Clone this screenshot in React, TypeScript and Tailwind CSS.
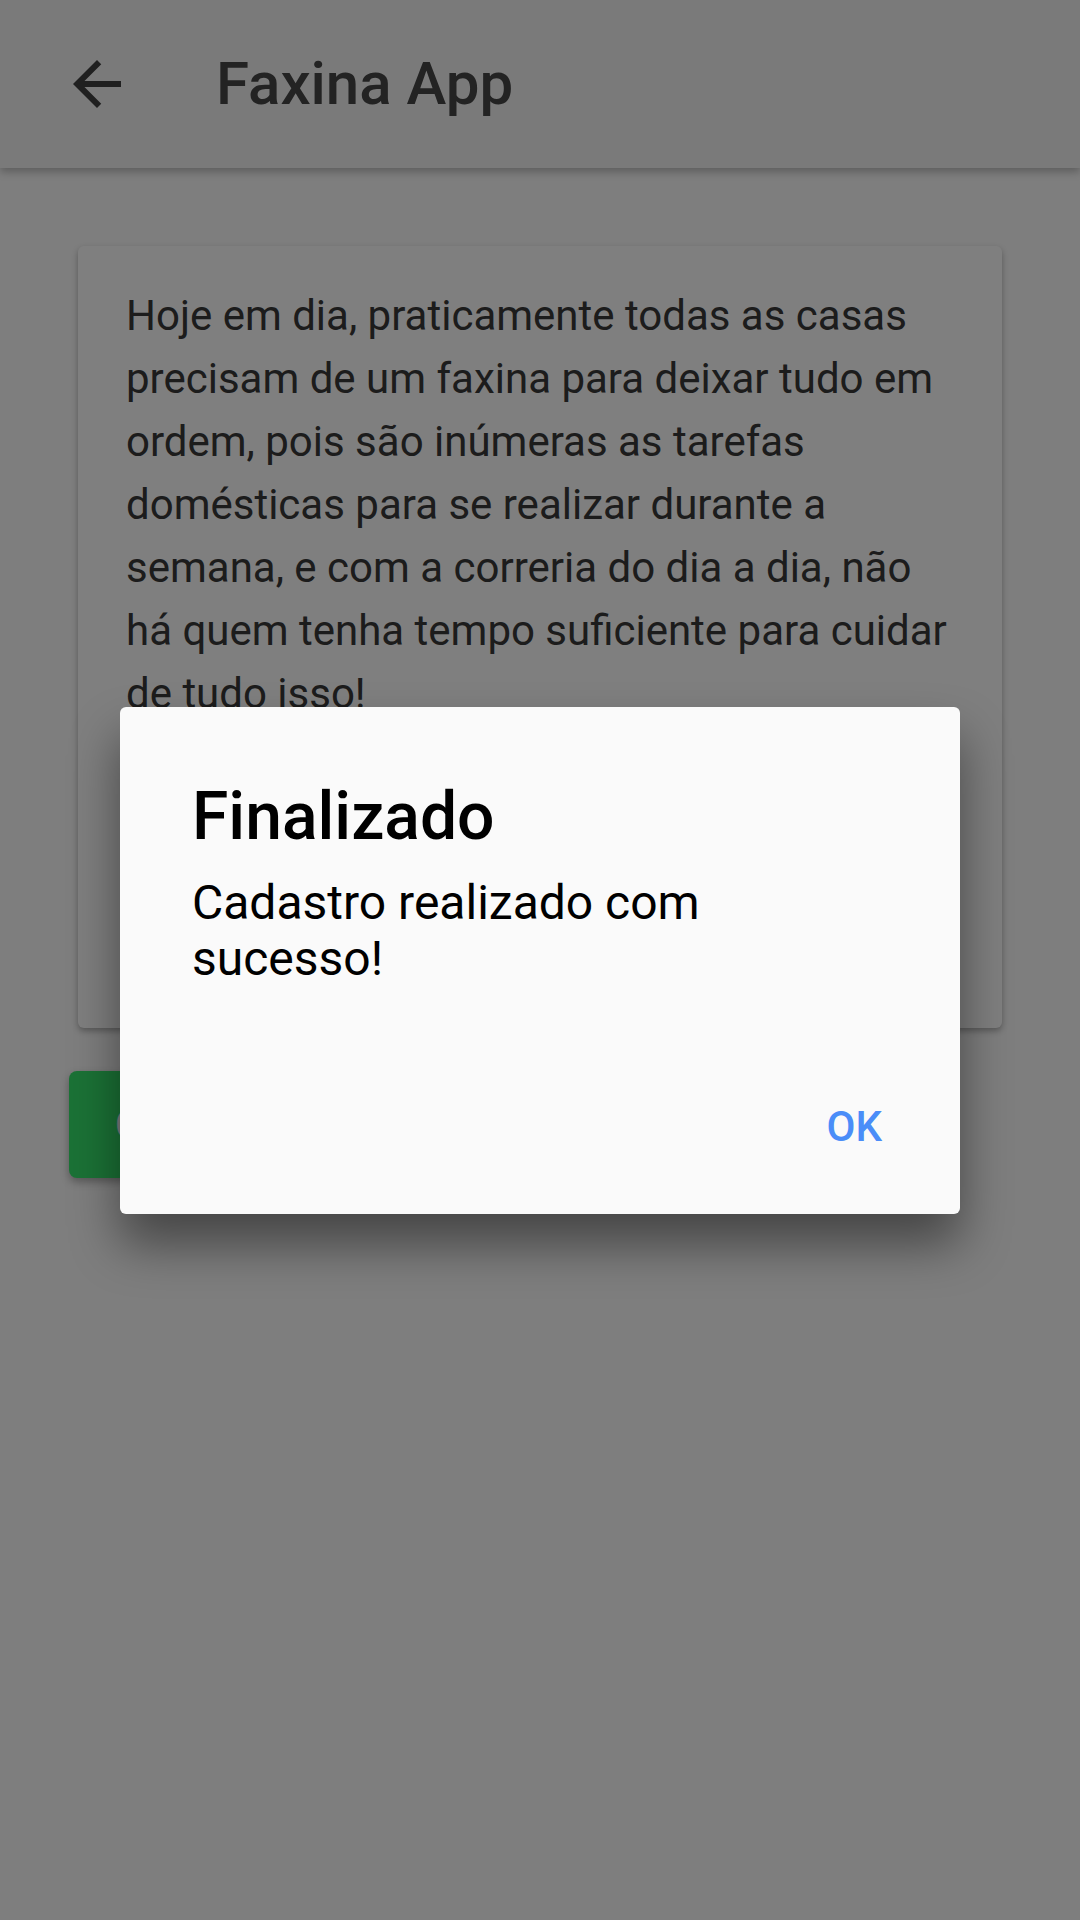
import React from 'react';

const ArrowBack: React.FC = () => (
  <svg viewBox="0 0 24 24" className="w-[72px] h-[72px]" fill="#404040">
    <path d="M20 11H7.83l5.59-5.59L12 4l-8 8 8 8 1.41-1.41L7.83 13H20v-2z" />
  </svg>
);

const texto =
  'Hoje em dia, praticamente todas as casas precisam de um faxina para deixar tudo em ordem, pois são inúmeras as tarefas domésticas para se realizar durante a semana, e com a correria do dia a dia, não há quem tenha tempo suficiente para cuidar de tudo isso!';

const App: React.FC = () => {
  return (
    <div
      className="relative w-[1080px] h-[1920px] overflow-hidden bg-[#fcfcfc]"
      style={{ fontFamily: 'Roboto, "Noto Sans", sans-serif' }}
    >
      {/* App bar */}
      <header className="relative z-10 h-[168px] flex items-center bg-[#f4f4f4] shadow-[0_4px_8px_rgba(0,0,0,0.25)]">
        <div className="ml-[61px]">
          <ArrowBack />
        </div>
        <h1 className="ml-[83px] text-[60px] font-medium text-[#464646] leading-none">Faxina App</h1>
      </header>

      {/* Content */}
      <main className="px-[78px] pt-[78px]">
        <div className="h-[782px] bg-white rounded-[6px] shadow-[0_3px_6px_rgba(0,0,0,0.3)] px-[48px] pt-[38px]">
          <p className="text-[42px] leading-[63px] text-[#383838]">{texto}</p>
        </div>

        <button className="mt-[43px] -ml-[9px] h-[107px] w-[620px] rounded-[8px] bg-[#36e46c] shadow-[0_4px_8px_rgba(0,0,0,0.3)] flex items-center pl-[46px] text-[42px] font-medium text-white">
          CONFIRMAR
        </button>
      </main>

      {/* Dialog */}
      <div className="absolute inset-0 z-20 bg-black/50 flex items-center justify-center">
        <div className="w-[840px] h-[507px] bg-[#fafafa] rounded-[6px] shadow-[0_30px_50px_rgba(0,0,0,0.45)] px-[72px] pt-[71px] flex flex-col">
          <h2 className="text-[66px] leading-[78px] font-medium text-black">Finalizado</h2>
          <p className="mt-[19px] text-[48px] leading-[56px] text-black">
            Cadastro realizado com
            <br />
            sucesso!
          </p>
          <div className="mt-[116px] flex justify-end mr-[6px]">
            <button className="text-[42px] leading-[48px] font-medium text-[#4a8df8]">OK</button>
          </div>
        </div>
      </div>
    </div>
  );
};

export default App;
